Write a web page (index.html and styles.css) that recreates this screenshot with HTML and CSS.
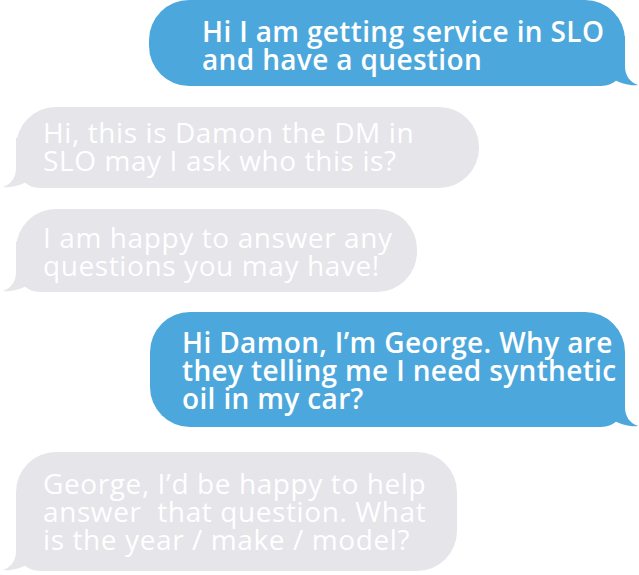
FILE: index.html
```html
<!DOCTYPE html>
<html lang="en">
<head>
<meta charset="utf-8">
<title>Chat</title>
<link rel="stylesheet" href="styles.css">
</head>
<body>
<div class="chat">
  <div class="bubble sent b1">
    <p class="text">Hi I am getting service in SLO<br>and have a question</p>
    <svg class="tail tail-right" viewBox="0 0 40 50" width="40" height="50"><path d="M26,0 L26,30 C26,40 31,46 39,49 C32,50 22,48 12,42 L12,0 Z"/></svg>
  </div>
  <div class="bubble recv b2">
    <p class="text">Hi, this is Damon the DM in<br>SLO may I ask who this is?</p>
    <svg class="tail tail-left" viewBox="0 0 40 50" width="40" height="50"><path d="M14,0 L14,30 C14,40 9,46 1,49 C8,50 18,48 28,42 L28,0 Z"/></svg>
  </div>
  <div class="bubble recv b3">
    <p class="text">I am happy to answer any<br>questions you may have!</p>
    <svg class="tail tail-left" viewBox="0 0 40 50" width="40" height="50"><path d="M14,0 L14,30 C14,40 9,46 1,49 C8,50 18,48 28,42 L28,0 Z"/></svg>
  </div>
  <div class="bubble sent b4">
    <p class="text">Hi Damon, I’m George. Why are<br>they telling me I need synthetic<br>oil in my car?</p>
    <svg class="tail tail-right" viewBox="0 0 40 50" width="40" height="50"><path d="M26,0 L26,30 C26,40 31,46 39,49 C32,50 22,48 12,42 L12,0 Z"/></svg>
  </div>
  <div class="bubble recv b5">
    <p class="text">George, I’d be happy to help<br>answer&nbsp; that question. What<br>is the year / make / model?</p>
    <svg class="tail tail-left" viewBox="0 0 40 50" width="40" height="50"><path d="M14,0 L14,30 C14,40 9,46 1,49 C8,50 18,48 28,42 L28,0 Z"/></svg>
  </div>
</div>
</body>
</html>
```
FILE: styles.css
```css
html, body {
  margin: 0;
  padding: 0;
  background: #ffffff;
}

.chat {
  display: flex;
  flex-direction: column;
  width: 639px;
  font-family: "Open Sans", "Noto Sans", sans-serif;
  font-size: 28px;
  line-height: 28px;
  color: #ffffff;
}

.bubble {
  position: relative;
  box-sizing: border-box;
  border-radius: 40px;
}

.text {
  margin: 0;
  white-space: nowrap;
  position: relative;
  z-index: 1;
}

.sent {
  align-self: flex-end;
  margin-right: 14px;
  background: #4ca8dc;
  font-weight: 600;
  letter-spacing: 0.35px;
  border-bottom-right-radius: 24px;
}

.recv {
  align-self: flex-start;
  margin-left: 16px;
  background: #e5e5ea;
  font-weight: 400;
  letter-spacing: 0.6px;
  border-bottom-left-radius: 24px;
}

.tail {
  position: absolute;
  bottom: 0;
}

.tail-right {
  right: -14px;
  fill: #4ca8dc;
}

.tail-left {
  left: -14px;
  fill: #e5e5ea;
}

.b1 {
  width: 476px;
  padding: 17px 10px 13px 53px;
}

.b2 {
  width: 463px;
  margin-top: 21px;
  padding: 11px 10px 14px 27px;
}

.b3 {
  width: 401px;
  margin-top: 21px;
  padding: 14px 10px 13px 27px;
}

.b4 {
  width: 475px;
  margin-top: 20px;
  padding: 16px 10px 15px 32px;
}

.b5 {
  width: 441px;
  margin-top: 25px;
  padding: 17px 10px 18px 27px;
}
```
